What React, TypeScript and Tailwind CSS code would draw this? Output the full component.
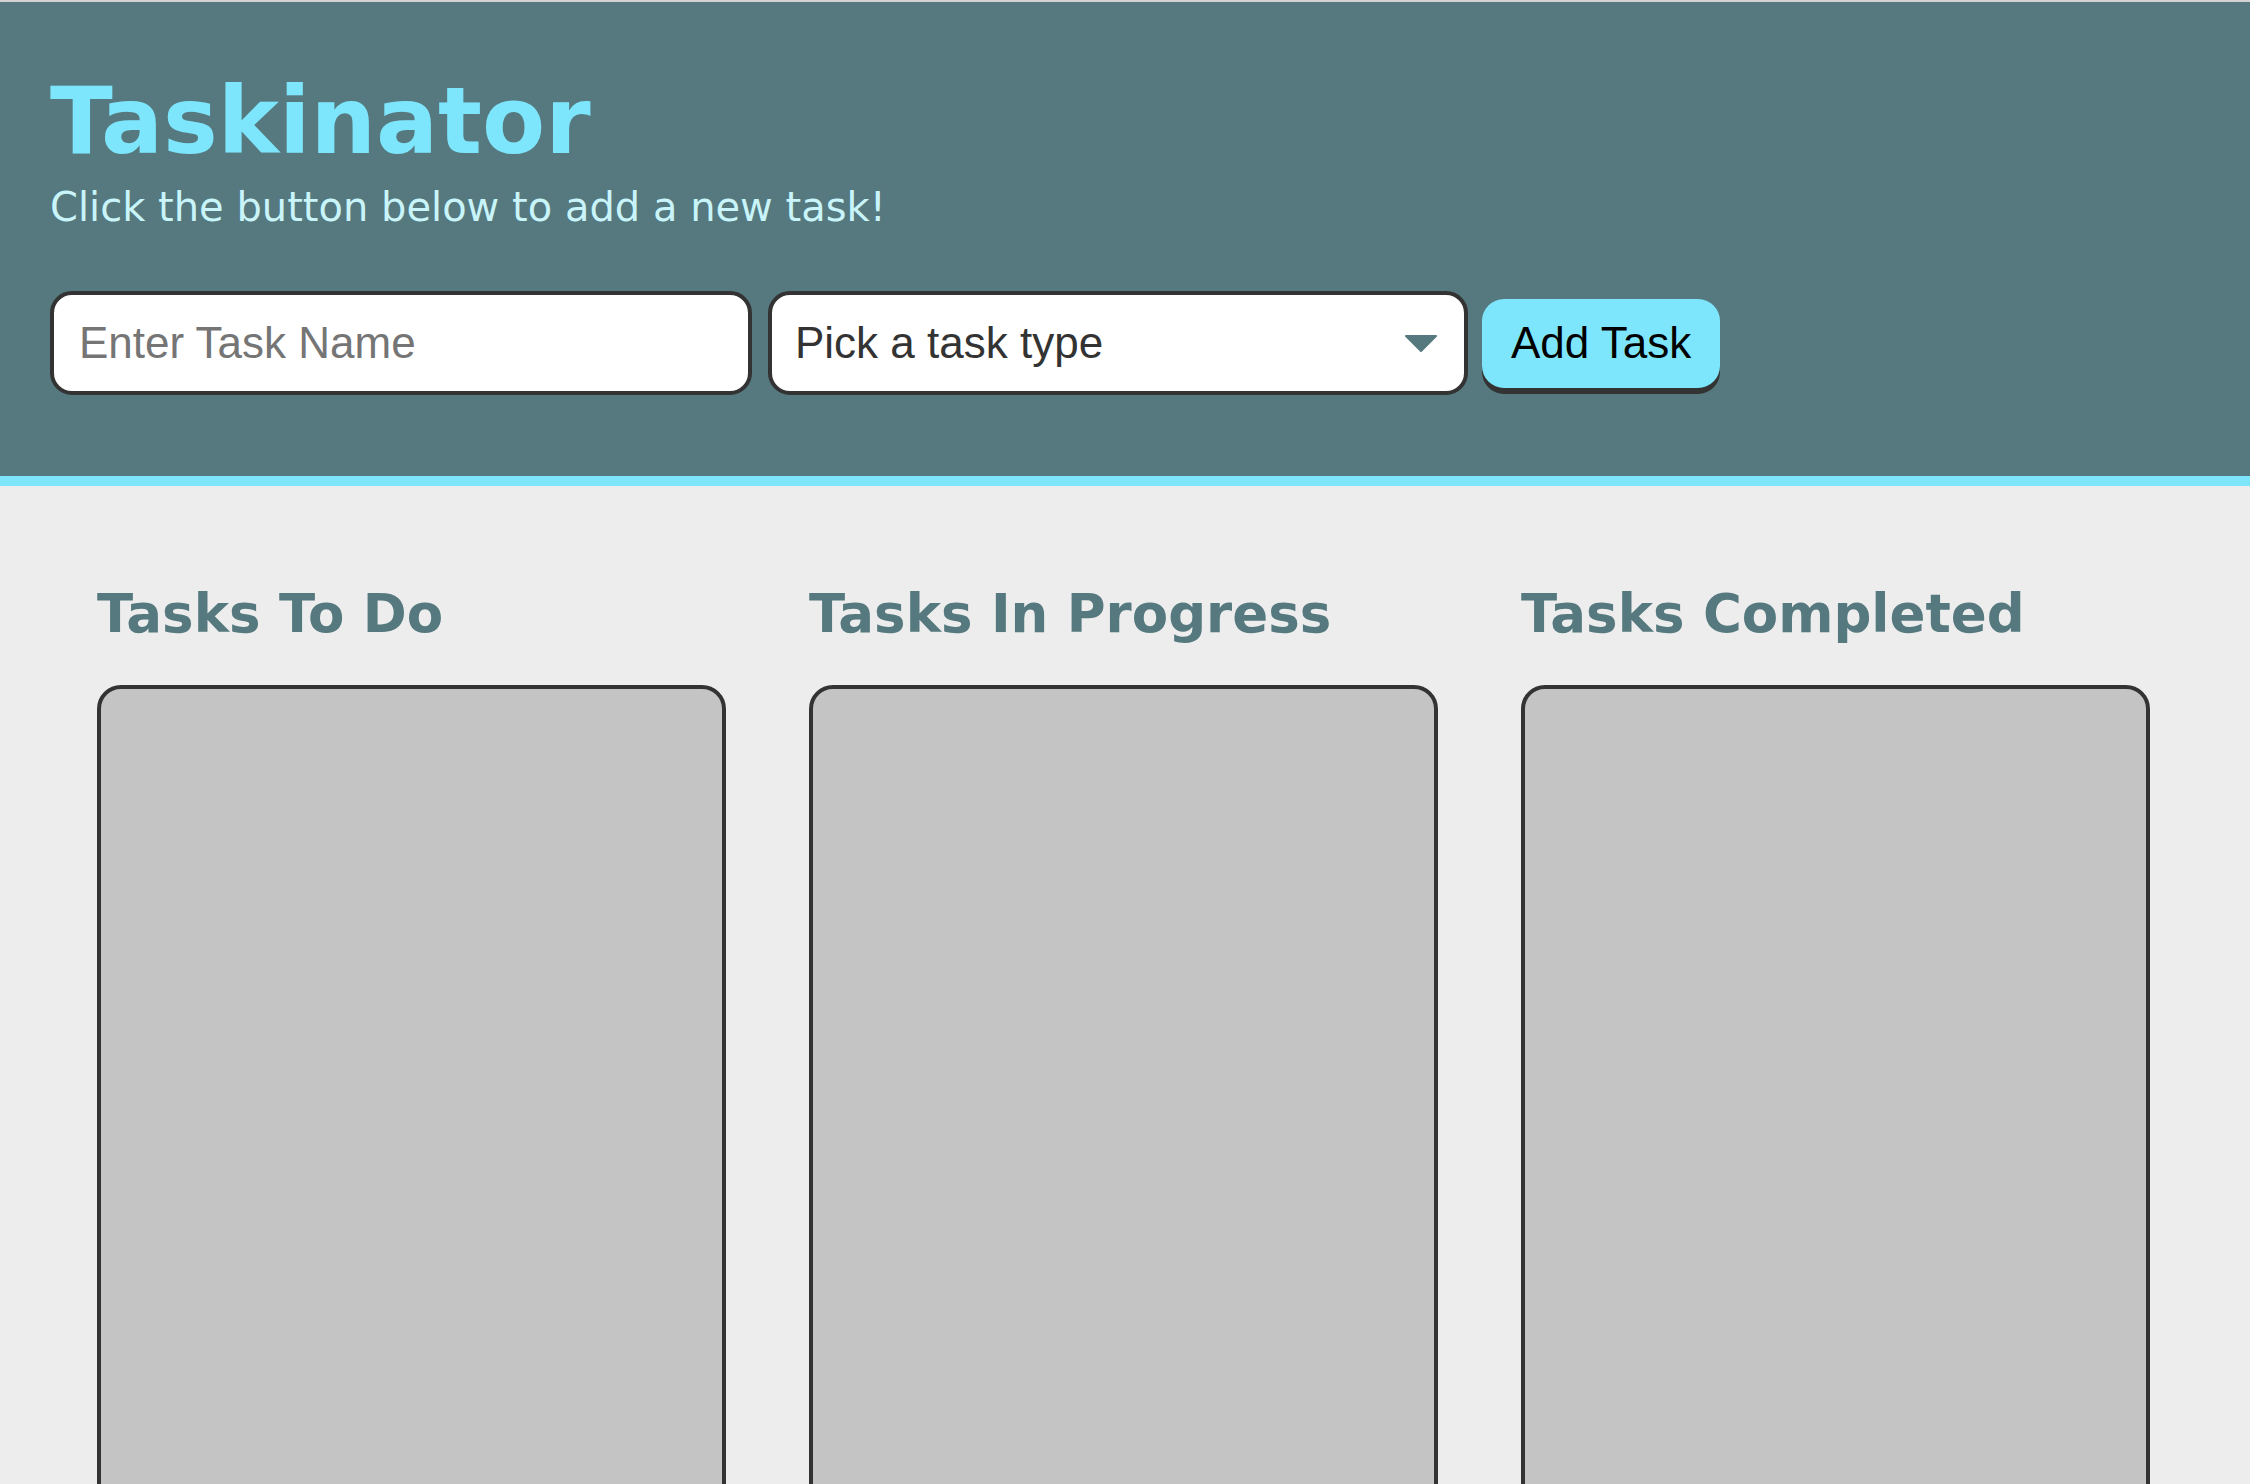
import { useState } from "react";

// Taskinator — header with the add-task form, then three task columns.

const columns = [
  { id: "to-do", title: "Tasks To Do" },
  { id: "in-progress", title: "Tasks In Progress" },
  { id: "completed", title: "Tasks Completed" },
];

export default function App() {
  const [name, setName] = useState("");
  const [type, setType] = useState("");

  return (
    <div className="min-h-screen border-t-2 border-[#d3d3d3] bg-[#ededed]">
      {/* ── header ── */}
      <header className="border-b-[10px] border-[#7ee6fc] bg-[#55797e] px-[50px] pt-[66px] pb-[81px]">
        <h1 className="font-['DejaVu_Sans',Verdana,sans-serif] text-[92px] font-bold leading-[107px] text-[#7ee6fc]">
          Taskinator
        </h1>
        <p className="mt-[9px] font-['DejaVu_Sans',Verdana,sans-serif] text-[40px] leading-[47px] text-[#c8f4fa]">
          Click the button below to add a new task!
        </p>

        <form
          className="mt-[60px] flex items-center font-['Liberation_Sans',Arial,sans-serif]"
          onSubmit={(e) => e.preventDefault()}
        >
          <input
            type="text"
            value={name}
            onChange={(e) => setName(e.target.value)}
            placeholder="Enter Task Name"
            className="h-[104px] w-[702px] rounded-[22px] border-4 border-[#333] bg-white px-[25px] text-[44px] text-[#333] placeholder:text-[#757575] focus:outline-none"
          />

          <div className="relative ml-[16px] w-[700px]">
            <select
              value={type}
              onChange={(e) => setType(e.target.value)}
              className="h-[104px] w-full appearance-none rounded-[22px] border-4 border-[#333] bg-white pl-[23px] pr-[80px] text-[44px] text-[#333] focus:outline-none"
            >
              <option value="" disabled>
                Pick a task type
              </option>
              <option value="web">Web</option>
              <option value="mobile">Mobile</option>
              <option value="print">Print</option>
            </select>
            <svg
              className="pointer-events-none absolute right-[31px] top-[44px] h-[17px] w-[32px]"
              viewBox="0 0 32 17"
              aria-hidden
            >
              <path d="M1 1 L31 1 L16 16 Z" fill="#55797e" stroke="#55797e" strokeWidth="2" strokeLinejoin="round" />
            </svg>
          </div>

          <button
            type="submit"
            className="ml-[14px] h-[89px] rounded-[22px] bg-[#7ee6fc] px-[29px] text-[44px] text-black shadow-[0_6px_0_#333]"
          >
            Add Task
          </button>
        </form>
      </header>

      {/* ── columns ── */}
      <main className="grid grid-cols-3 gap-[83px] pl-[97px] pr-[100px] pt-[97px]">
        {columns.map((c) => (
          <section key={c.id} className="flex flex-col">
            <h2 className="font-['DejaVu_Sans',Verdana,sans-serif] text-[53px] font-bold leading-[62px] text-[#55797e]">
              {c.title}
            </h2>
            <ul className="mt-[40px] h-[900px] rounded-[24px] border-4 border-[#333] bg-[#c4c4c4]" />
          </section>
        ))}
      </main>
    </div>
  );
}
